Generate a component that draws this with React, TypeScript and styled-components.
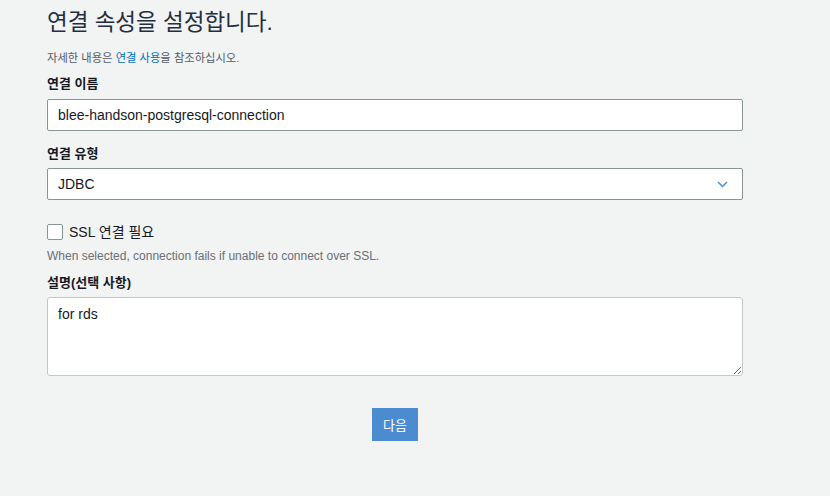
import * as React from "react";
import styled, { createGlobalStyle } from "styled-components";

const GlobalStyle = createGlobalStyle`
  body {
    margin: 0;
    background: #f2f3f3;
    font-family: "Liberation Sans", "Noto Sans CJK KR", Arial, sans-serif;
    color: #16191f;
  }
`;

const Page = styled.main`
  padding: 0 0 40px 47px;
`;

const Form = styled.form`
  display: flex;
  flex-direction: column;
  width: 696px;
`;

const Title = styled.h1`
  margin: 8px 0 0;
  font-size: 22.5px;
  line-height: 30px;
  font-weight: normal;
  color: #232f3e;
`;

const Hint = styled.p`
  margin: 12px 0 0;
  font-size: 11.3px;
  line-height: 16px;
  color: #545b64;

  a {
    color: #0073bb;
    text-decoration: none;
  }
`;

const Label = styled.label<{ $gap: number }>`
  margin-top: ${(p) => p.$gap}px;
  font-size: 13px;
  line-height: 18px;
  font-weight: bold;
  color: #16191f;
`;

const fieldBase = `
  box-sizing: border-box;
  width: 100%;
  background: #fff;
  font-family: "Liberation Sans", "Noto Sans CJK KR", Arial, sans-serif;
  font-size: 14px;
  color: #16191f;
  outline: none;
`;

const TextInput = styled.input`
  ${fieldBase}
  margin-top: 6px;
  height: 32px;
  padding: 0 10px;
  border: 1px solid #879596;
  border-radius: 2px;
`;

const SelectBox = styled.div`
  ${fieldBase}
  display: flex;
  align-items: center;
  justify-content: space-between;
  margin-top: 5px;
  height: 32px;
  padding: 0 14px 0 10px;
  border: 1px solid #879596;
  border-radius: 2px;
`;

const CheckRow = styled.label`
  display: flex;
  align-items: center;
  gap: 6px;
  margin-top: 24px;
  font-size: 14px;
  line-height: 16px;
  color: #16191f;
`;

const Box = styled.span`
  box-sizing: border-box;
  width: 16px;
  height: 16px;
  background: #fff;
  border: 1px solid #879596;
  border-radius: 2px;
`;

const Help = styled.p`
  margin: 8px 0 0;
  font-size: 12px;
  line-height: 16px;
  color: #687078;
`;

const TextArea = styled.textarea`
  ${fieldBase}
  margin-top: 5px;
  height: 79px;
  padding: 6px 10px;
  border: 1px solid #c6c6c6;
  border-radius: 3px;
  line-height: 20px;
  resize: vertical;
`;

const Actions = styled.div`
  display: flex;
  justify-content: center;
  margin-top: 32px;
`;

const Button = styled.button`
  height: 33px;
  padding: 0 11px;
  border: none;
  background: #4a8ccf;
  color: #fff;
  font-family: "Liberation Sans", "Noto Sans CJK KR", Arial, sans-serif;
  font-size: 13px;
  cursor: pointer;
`;

const Chevron = () => (
  <svg width="11" height="7" viewBox="0 0 11 7" fill="none">
    <path d="M1 1l4.5 4.5L10 1" stroke="#4a8ed4" strokeWidth="1.5" />
  </svg>
);

const App: React.FC = () => {
  return (
    <>
      <GlobalStyle />
      <Page>
        <Form onSubmit={(e) => e.preventDefault()}>
          <Title>연결 속성을 설정합니다.</Title>
          <Hint>
            자세한 내용은 <a href="#">연결 사용</a>을 참조하십시오.
          </Hint>

          <Label $gap={9}>연결 이름</Label>
          <TextInput defaultValue="blee-handson-postgresql-connection" />

          <Label $gap={14}>연결 유형</Label>
          <SelectBox>
            <span>JDBC</span>
            <Chevron />
          </SelectBox>

          <CheckRow>
            <Box />
            SSL 연결 필요
          </CheckRow>
          <Help>When selected, connection fails if unable to connect over SSL.</Help>

          <Label $gap={10}>설명(선택 사항)</Label>
          <TextArea defaultValue="for rds" />

          <Actions>
            <Button type="submit">다음</Button>
          </Actions>
        </Form>
      </Page>
    </>
  );
};

export default App;
